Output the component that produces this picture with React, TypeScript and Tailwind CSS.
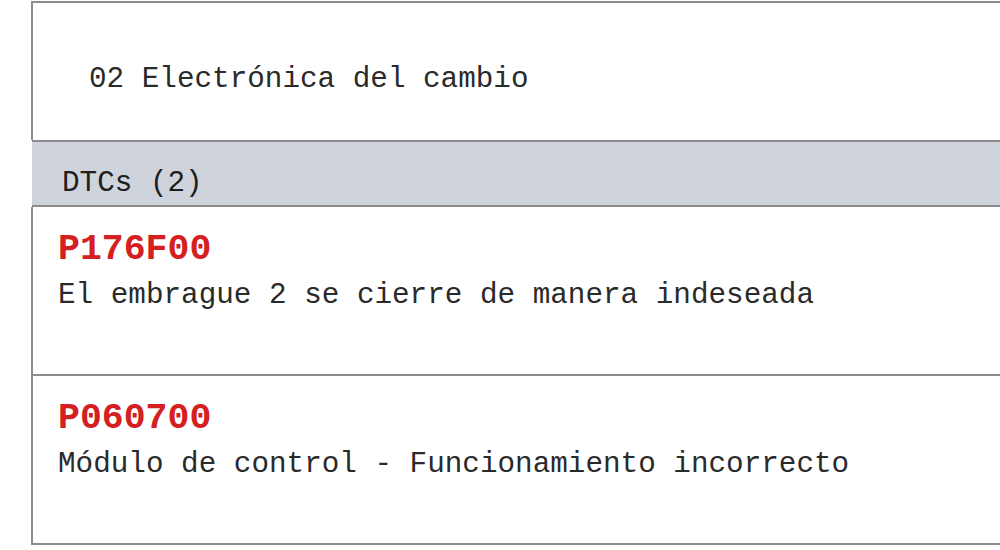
const dtcs = [
  { code: "P176F00", text: "El embrague 2 se cierre de manera indeseada" },
  { code: "P060700", text: "Módulo de control - Funcionamiento incorrecto" },
];

export default function App() {
  return (
    <div className="w-[1000px] h-[550px] overflow-hidden bg-white pl-[31px] pt-px font-['Liberation_Mono','Courier_New',monospace] text-[#2a2a2a]">
      <div className="h-[139px] border-l-2 border-t-2 border-[#8c8c8c] pl-[56px] pt-[62px]">
        <div className="text-[29.3px] leading-[29px]">02 Electrónica del cambio</div>
      </div>

      <div className="ml-px h-[67px] border-y-2 border-[#8c8c8c] bg-[#cfd3db] pl-[30px] pt-[27px]">
        <div className="text-[29.3px] leading-[29px] text-[#1e1e1e]">DTCs (2)</div>
      </div>

      {dtcs.map((d) => (
        <div
          key={d.code}
          className="h-[169px] border-l-2 border-b-2 border-[#8c8c8c] pl-[25px] pt-[25px]"
        >
          <div className="text-[36.5px] leading-[36px] font-bold text-[#d42020]">{d.code}</div>
          <div className="mt-[13px] text-[29.3px] leading-[29px]">{d.text}</div>
        </div>
      ))}
    </div>
  );
}
